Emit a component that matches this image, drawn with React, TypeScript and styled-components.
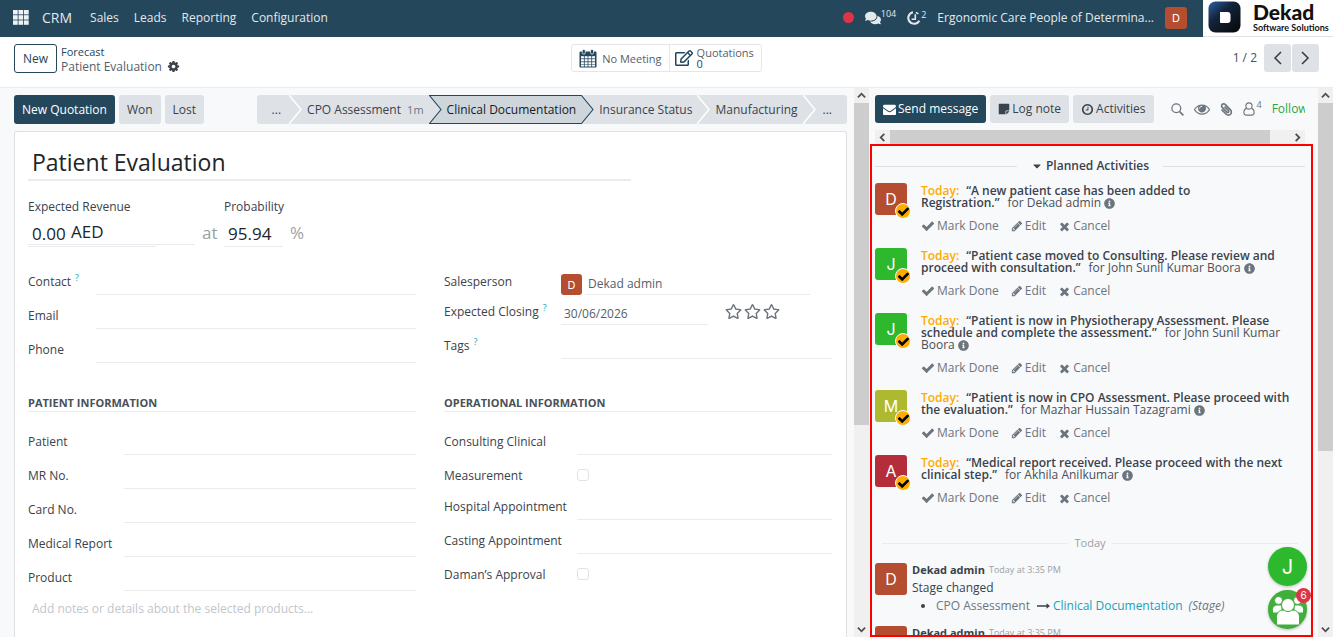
import React, { useId } from "react";
import styled, { createGlobalStyle } from "styled-components";
import { FaComments, FaInfoCircle, FaRegEdit, FaRegStar, FaCaretDown, FaPaperclip, FaStickyNote } from "react-icons/fa";

const color = {
  brand: "#24475c",
  text: "#3a424b",
  value: "#565e67",
  muted: "#6c757d",
  faint: "#9a9fa5",
  line: "#e9ebee",
  grey: "#dee2e6",
  page: "#f8f9fb",
  rust: "#b54d30",
  green: "#2eb82e",
  orange: "#ffac00",
  teal: "#17a2b8",
};

const GlobalStyle = createGlobalStyle`
  *, *::before, *::after { box-sizing: border-box; }
  body { margin: 0; background: #fff; color: ${color.text}; font: 12px/16px "Open Sans", "Noto Sans", sans-serif; }
  button, input, textarea { font: inherit; color: inherit; margin: 0; }
  button { padding: 0; border: 0; background: none; cursor: pointer; }
  a { color: inherit; text-decoration: none; }
  svg { display: block; flex: none; }
`;

/* ---------- icons ---------- */

const Glyph = ({ d, size = 14 }: { d: string; size?: number }) => (
  <svg width={size} height={size} viewBox="0 0 1792 1792" fill="currentColor" aria-hidden="true">
    <path d={d} />
  </svg>
);

const paths = {
  check:
    "M1671 566q0 40-28 68l-724 724-136 136q-28 28-68 28t-68-28l-136-136-362-362q-28-28-28-68t28-68l136-136q28-28 68-28t68 28l294 295 656-657q28-28 68-28t68 28l136 136q28 28 28 68z",
  times:
    "M1490 1322q0 40-28 68l-136 136q-28 28-68 28t-68-28l-294-294-294 294q-28 28-68 28t-68-28l-136-136q-28-28-28-68t28-68l294-294-294-294q-28-28-28-68t28-68l136-136q28-28 68-28t68 28l294 294 294-294q28-28 68-28t68 28l136 136q28 28 28 68t-28 68l-294 294 294 294q28 28 28 68z",
  pencil:
    "M491 1536l91-91-235-235-91 91v107h128v128h107zm523-928q0-22-22-22-10 0-17 7l-542 542q-7 7-7 17 0 22 22 22 10 0 17-7l542-542q7-7 7-17zm-54-192l416 416-832 832h-416v-416zm683 96q0 53-37 90l-166 166-416-416 166-165q36-38 90-38 53 0 91 38l235 234q37 39 37 91z",
  cog: "M1152 896q0-106-75-181t-181-75-181 75-75 181 75 181 181 75 181-75 75-181zm512-109v222q0 12-8 23t-20 13l-185 28q-19 54-39 91 35 50 107 138 10 12 10 25t-9 23q-27 37-99 108t-94 71q-12 0-26-9l-138-108q-44 23-91 38-16 136-29 186-7 28-36 28h-222q-14 0-24.5-8.5t-11.5-21.5l-28-184q-49-16-90-37l-141 107q-10 9-25 9-14 0-25-11-126-114-165-168-7-10-7-23 0-12 8-23 15-21 51-66.5t54-70.5q-27-50-41-99l-183-27q-13-2-21-12.5t-8-23.5v-222q0-12 8-23t19-13l186-28q14-46 39-92-40-57-107-138-10-12-10-24 0-10 9-23 26-36 98.5-107.5t94.5-71.5q13 0 26 10l138 107q44-23 91-38 16-136 29-186 7-28 36-28h222q14 0 24.5 8.5t11.5 21.5l28 184q49 16 90 37l142-107q9-9 24-9 13 0 25 10 129 119 165 170 7 8 7 22 0 12-8 23-15 21-51 66.5t-54 70.5q26 50 41 98l183 28q13 2 21 12.5t8 23.5z",
  clock:
    "M1024 544v448q0 14-9 23t-23 9h-320q-14 0-23-9t-9-23v-64q0-14 9-23t23-9h224v-352q0-14 9-23t23-9h64q14 0 23 9t9 23zm416 352q0-148-73-273t-198-198-273-73-273 73-198 198-73 273 73 273 198 198 273 73 273-73 198-198 73-273zm224 0q0 209-103 385.5t-279.5 279.5-385.5 103-385.5-103-279.5-279.5-103-385.5 103-385.5 279.5-279.5 385.5-103 385.5 103 279.5 279.5 103 385.5z",
  eye: "M1664 960q-152-236-381-353 61 104 61 225 0 185-131.5 316.5t-316.5 131.5-316.5-131.5-131.5-316.5q0-121 61-225-229 117-381 353 133 205 333.5 326.5t434.5 121.5 434.5-121.5 333.5-326.5zm-720-384q0-20-14-34t-34-14q-125 0-214.5 89.5t-89.5 214.5q0 20 14 34t34 14 34-14 14-34q0-86 61-147t147-61q20 0 34-14t14-34zm848 384q0 34-20 69-140 230-376.5 368.5t-499.5 138.5-499.5-139-376.5-368q-20-35-20-69t20-69q140-229 376.5-368t499.5-139 499.5 139 376.5 368q20 35 20 69z",
  envelope:
    "M1792 710v794q0 66-47 113t-113 47h-1472q-66 0-113-47t-47-113v-794q44 49 101 87 362 246 497 345 57 42 92.5 65.5t94.5 48 110 24.5h2q51 0 110-24.5t94.5-48 92.5-65.5q170-123 498-345 57-39 100-87zm0-294q0 79-49 151t-122 123q-376 261-468 325-10 7-42.5 30.5t-54 38-52 32.5-57.5 27-50 9h-2q-23 0-50-9t-57.5-27-52-32.5-54-38-42.5-30.5q-91-64-262-182.5t-205-142.5q-62-42-117-115.5t-55-136.5q0-78 41.5-130t118.5-52h1472q65 0 112.5 47t47.5 113z",
};

const AppsIcon = () => (
  <svg width="16" height="15" viewBox="0 0 16 15" fill="#eef2f4" aria-hidden="true">
    {[0, 5.5, 11].map((x) => [0, 5.2, 10.4].map((y) => <rect key={`${x}-${y}`} x={x} y={y} width="4.7" height="4.4" />))}
  </svg>
);

const ActivityClockIcon = () => (
  <svg width="14" height="14" viewBox="0 0 14 14" fill="none" stroke="currentColor" aria-hidden="true">
    <path d="M6 1.3A5.8 5.8 0 1 0 12.3 9.6" strokeWidth="2.1" />
    <path d="M8.3 3.2v5H4.6" strokeWidth="1.6" />
    <path d="M8.8 1.4a6 6 0 0 1 2.6 1.5" strokeWidth="1.6" />
  </svg>
);

const CalendarIcon = () => (
  <svg width="18" height="19" viewBox="0 0 18 19" aria-hidden="true">
    <path d="M1.5 2.5h15a1 1 0 0 1 1 1v14a1 1 0 0 1-1 1h-15a1 1 0 0 1-1-1v-14a1 1 0 0 1 1-1z" fill={color.brand} />
    {[2, 5.7, 9.4, 13.1].map((x) => [7.2, 10.2, 13.2, 15.9].map((y) => <rect key={`${x}-${y}`} x={x} y={y} width="2.9" height={y > 15 ? 1.6 : 2.2} fill="#fff" />))}
    {[3.3, 11.5].map((x) => (
      <rect key={x} x={x} y="0.5" width="3" height="4.6" rx="1.3" fill={color.brand} stroke="#fff" strokeWidth="0.7" />
    ))}
  </svg>
);

const SearchIcon = () => (
  <svg width="13" height="13" viewBox="0 0 13 13" fill="none" stroke="currentColor" strokeWidth="1.3" aria-hidden="true">
    <circle cx="5.3" cy="5.3" r="4.4" />
    <path d="M8.6 8.6l3.8 3.8" strokeWidth="1.6" />
  </svg>
);

const UserIcon = () => (
  <svg width="12" height="14" viewBox="0 0 12 14" fill="none" stroke="currentColor" strokeWidth="1.1" aria-hidden="true">
    <circle cx="6" cy="4" r="3.1" />
    <path d="M3.6 6.4C1.6 6.8.9 8.6.9 10.6c0 1.6.7 2.5 2 2.5h6.2c1.3 0 2-.9 2-2.5 0-2-.7-3.8-2.7-4.2" />
  </svg>
);

const ArrowRightIcon = () => (
  <svg width="13" height="8" viewBox="0 0 13 8" fill="currentColor" aria-hidden="true">
    <path d="M0 3.3h9.500V1.200L13 4 9.500 6.800V4.700H0z" />
  </svg>
);

const AngleIcon = ({ dir, size = 9 }: { dir: "up" | "down" | "left" | "right"; size?: number }) => {
  const d = { up: "M1 7l4-4 4 4", down: "M1 3l4 4 4-4", left: "M7 1L3 5l4 4", right: "M3 1l4 4-4 4" }[dir];
  return (
    <svg width={size} height={size} viewBox="0 0 10 10" fill="none" stroke="#505050" strokeWidth="2" aria-hidden="true">
      <path d={d} />
    </svg>
  );
};

const PagerIcon = ({ dir }: { dir: "left" | "right" }) => (
  <svg width="9" height="14" viewBox="0 0 9 14" fill="none" stroke="#343a40" strokeWidth="1.5" aria-hidden="true">
    <path d={dir === "left" ? "M8 1L2 7l6 6" : "M1 1l6 6-6 6"} />
  </svg>
);

const GroupIcon = () => (
  <svg width="34" height="34" viewBox="0 0 34 34" fill="#fff" stroke="#3fae3a" strokeWidth="1" aria-hidden="true">
    <circle cx="7.5" cy="7.5" r="4" />
    <circle cx="26.5" cy="7.5" r="4" />
    <path d="M1.5 20v-3.5a4.5 4.5 0 0 1 4.5-4.5h5v8z" />
    <path d="M32.5 20v-3.5a4.5 4.5 0 0 0-4.5-4.5h-5v8z" />
    <path d="M5.5 31v-7.5a6.5 6.5 0 0 1 6.5-6.5h10a6.5 6.5 0 0 1 6.5 6.5V31a1 1 0 0 1-1 1h-21a1 1 0 0 1-1-1z" />
    <circle cx="17" cy="12" r="6.5" />
  </svg>
);

const LogoMark = () => {
  const id = useId();
  return (
    <svg width="33" height="32" viewBox="0 0 33 32" aria-hidden="true">
      <defs>
        <linearGradient id={id} x1="0" y1="0" x2="0.8" y2="0.9">
          <stop offset="0" stopColor="#2d62a8" />
          <stop offset="0.45" stopColor="#13243c" />
          <stop offset="1" stopColor="#0a0e14" />
        </linearGradient>
      </defs>
      <rect x="0.5" y="0.5" width="32" height="31" rx="7" fill={`url(#${id})`} />
      <path d="M12 11h7.5a3 3 0 0 1 3 3v5a3 3 0 0 1-3 3H13a1 1 0 0 1-1-1z" fill="#fff" />
    </svg>
  );
};

/* ---------- shell ---------- */

const Page = styled.div`
  display: flex;
  flex-direction: column;
  height: 100vh;
  padding-bottom: 2px;
  overflow: hidden;
`;

const Navbar = styled.nav`
  display: flex;
  align-items: stretch;
  height: 37px;
  flex: none;
  background: ${color.brand};
  color: #e3e8eb;
  white-space: nowrap;
`;

const NavMenu = styled.div`
  display: flex;
  align-items: center;
  gap: 15px;
  flex: 1;
  padding: 0 13px 2px;
`;

const NavBrand = styled.a`
  margin: 0 3px 0 -2px;
  font-size: 14px;
`;

const NavTools = styled.div`
  display: flex;
  align-items: center;
  gap: 11px;
  padding: 0 16px 2px 0;
`;

const NavCounter = styled.button`
  display: flex;
  align-items: center;
  sup {
    align-self: flex-start;
    font-size: 9px;
    line-height: 8px;
  }
`;

const RecordDot = styled.span`
  width: 11px;
  height: 11px;
  border-radius: 50%;
  background: #dc3545;
`;

const LogoBox = styled.a`
  display: flex;
  gap: 12px;
  width: 130px;
  padding: 1px 0 0 5px;
  background: #fff;
  border-bottom: 1px solid ${color.grey};
`;

const LogoText = styled.span`
  display: flex;
  flex-direction: column;
  color: #111;
  font-family: Lato, "Open Sans", sans-serif;
  font-weight: 700;
  font-size: 9px;
  line-height: 9px;
  strong {
    font-size: 21px;
    line-height: 22px;
  }
`;

const Avatar = styled.span<{ $tone: string; $size: number }>`
  position: relative;
  display: flex;
  align-items: center;
  justify-content: center;
  flex: none;
  width: ${(p) => p.$size}px;
  height: ${(p) => p.$size}px;
  border-radius: 3px;
  background: ${(p) => p.$tone};
  color: #fff;
  font-family: Inter, "Open Sans", sans-serif;
  font-size: ${(p) => (p.$size > 30 ? 16 : 11)}px;
`;

/* ---------- control panel ---------- */

const ControlPanel = styled.header`
  display: grid;
  grid-template-columns: 1fr auto 1fr;
  align-items: start;
  height: 51px;
  flex: none;
  padding: 7px 14px 0;
  border-bottom: 1px solid #e9ecef;
`;

const CrumbArea = styled.div`
  display: flex;
  gap: 4px;
`;

const NewButton = styled.button`
  width: 43px;
  height: 29px;
  border: 1px solid ${color.brand};
  border-radius: 3px;
  color: ${color.brand};
`;

const Crumbs = styled.div`
  display: flex;
  flex-direction: column;
  line-height: 15px;
  a {
    color: ${color.brand};
    font-size: 11px;
  }
  span {
    display: flex;
    align-items: center;
    gap: 5px;
    color: ${color.value};
  }
  svg {
    color: ${color.text};
  }
`;

const Stats = styled.div`
  display: flex;
  height: 28px;
  border: 1px solid #e4e7ea;
  border-radius: 3px;
`;

const Stat = styled.button`
  display: flex;
  align-items: center;
  gap: 5px;
  padding: 0 7px;
  text-align: left;
  font-size: 11px;
  line-height: 11px;
  color: ${color.value};
  & + & {
    padding: 0 7px 0 5px;
    gap: 4px;
    border-left: 1px solid #e4e7ea;
  }
  svg {
    color: ${color.brand};
  }
  b {
    display: block;
    font-weight: 400;
    color: ${color.brand};
  }
`;

const Pager = styled.div`
  display: flex;
  justify-content: flex-end;
  align-items: center;
  gap: 1px;
  span {
    margin-right: 6px;
    color: #495057;
  }
`;

const PagerButton = styled.button`
  display: flex;
  align-items: center;
  justify-content: center;
  width: 27px;
  height: 28px;
  background: ${color.grey};
  border-radius: 3px;
`;

/* ---------- body ---------- */

const Body = styled.main`
  display: grid;
  grid-template-columns: 854fr 15px 449fr 15px;
  flex: 1;
  min-height: 0;
  background: ${color.page};
`;

const FormPane = styled.section`
  display: flex;
  flex-direction: column;
  gap: 7px;
  min-width: 0;
  padding: 7px 7px 0 14px;
  overflow: hidden;
`;

const ScrollColumn = styled.div`
  display: flex;
  flex-direction: column;
  align-items: stretch;
  background: #f0f0f0;
`;

const ScrollRow = styled.div`
  display: flex;
  align-items: center;
  flex: none;
  height: 14px;
  margin: 0 13px 0 6px;
  background: #f0f0f0;
`;

const ScrollArrow = styled.button`
  display: flex;
  align-items: center;
  justify-content: center;
  flex: none;
  width: 15px;
  height: 15px;
`;

const ScrollTrack = styled.div`
  flex: 1;
  align-self: stretch;
`;

const ThumbY = styled.div<{ $part: number }>`
  height: ${(p) => p.$part}%;
  background: #cdcdcd;
`;

const ThumbX = styled.div`
  width: 95%;
  height: 100%;
  background: #cdcdcd;
`;

const ButtonRow = styled.div`
  display: flex;
  gap: 4px;
`;

const Button = styled.button<{ $primary?: boolean; $size?: "sm" }>`
  display: flex;
  align-items: center;
  justify-content: center;
  gap: 2px;
  height: ${(p) => (p.$size ? 28 : 29)}px;
  padding: 0 8px;
  border-radius: 3px;
  background: ${(p) => (p.$primary ? color.brand : color.grey)};
  color: ${(p) => (p.$primary ? "#fff" : color.text)};
  white-space: nowrap;
`;

const StatusBar = styled.div`
  display: flex;
  justify-content: space-between;
`;

const Steps = styled.div`
  display: flex;
  height: 29px;
  background: ${color.grey};
  border-radius: 3px;
  overflow: hidden;
`;

const Step = styled.button<{ $active?: boolean }>`
  padding: 0 5px;
  white-space: nowrap;
  ${(p) =>
    p.$active &&
    `background:#ced6dc; color:#16191c; border:solid #24475c; border-width:1px 0;`}
  small {
    margin-left: 3px;
    font-size: 11px;
    color: ${color.muted};
  }
`;

const MoreStep = styled(Step)<{ $first?: boolean }>`
  padding: 0 ${(p) => (p.$first ? 8 : 15)}px 0 ${(p) => (p.$first ? 15 : 7)}px;
`;

const Chevron = ({ from, to, edge }: { from?: boolean; to?: boolean; edge?: string }) => (
  <svg width="13" height="29" viewBox="0 0 13 29" aria-hidden="true">
    <rect width="13" height="29" fill={to ? "#ced6dc" : color.grey} />
    {to && <path d="M0 .5h13M0 28.5h13" stroke={color.brand} />}
    <path d="M0 0l12 14.5L0 29z" fill={from ? "#ced6dc" : color.grey} />
    <path d="M0 0l12 14.5L0 29" fill="none" stroke={edge || "#fff"} strokeWidth={edge ? 1.1 : 1.5} />
  </svg>
);

/* ---------- form ---------- */

const Sheet = styled.form`
  flex: 1;
  min-height: 0;
  padding: 14px 14px 0 13px;
  background: #fff;
  border: 1px solid ${color.grey};
  border-bottom: 0;
  border-radius: 3px 3px 0 0;
  overflow: hidden;
`;

const TitleInput = styled.input`
  display: block;
  width: 75%;
  height: 35px;
  padding: 0 4px 2px;
  border: 0;
  border-bottom: 2px solid ${color.line};
  background: none;
  color: #212529;
  font-size: 23px;
`;

const Figures = styled.div`
  display: grid;
  grid-template-columns: 167px 29px 59px auto;
  grid-template-rows: 20px 28px;
  row-gap: 3px;
  align-items: start;
  height: 64px;
  margin-top: 16px;
`;

const FigureLabel = styled.label`
  grid-column: span 2;
  line-height: 20px;
`;

const Money = styled.div`
  position: relative;
  height: 25px;
  border-bottom: 1px solid ${color.line};
`;

const Figure = styled.input`
  display: block;
  width: 100%;
  height: 27px;
  padding: 0 4px;
  border: 0;
  border-bottom: 1px solid ${color.line};
  background: none;
  color: #212529;
  font-size: 17px;
  ${Money} & {
    width: 128px;
  }
`;

const Currency = styled.span`
  position: absolute;
  top: 0;
  left: 43px;
  color: #212529;
  font-size: 17px;
  line-height: 24px;
`;

const Unit = styled.span`
  padding-left: 7px;
  color: ${color.faint};
  font-size: 17px;
  line-height: 26px;
`;

const Columns = styled.div`
  display: grid;
  grid-template-columns: 1fr 1fr;
  column-gap: 28px;
`;

const SectionTitle = styled.h2`
  margin: 31px 0 9px;
  border-bottom: 1px solid ${color.line};
  color: #495057;
  font-size: 11px;
  font-weight: 700;
  line-height: 17px;
`;

const Row = styled.div<{ $label: number; $kind?: "check" | "short" }>`
  display: grid;
  grid-template-columns: ${(p) => p.$label}px 1fr;
  height: ${(p) => (p.$kind === "check" ? 31 : p.$kind === "short" ? 30 : 34)}px;
  label {
    padding-top: ${(p) => (p.$kind === "short" ? 7 : 11)}px;
    line-height: 20px;
    white-space: nowrap;
  }
`;

const Hint = styled.sup`
  margin-left: 4px;
  color: ${color.teal};
  font-size: 9px;
  line-height: 8px;
`;

const TextInput = styled.input<{ $w?: number }>`
  align-self: end;
  width: ${(p) => (p.$w ? `${p.$w}%` : "100%")};
  min-width: 0;
  height: 22px;
  padding: 0 3px;
  border: 0;
  border-bottom: 1px solid ${color.line};
  background: none;
  color: ${color.value};
`;

const CheckBox = styled.input`
  appearance: none;
  width: 12px;
  height: 12px;
  margin-top: 14px;
  border: 1px solid #dfe2e6;
  border-radius: 3px;
  background: #fff;
`;

const PersonField = styled.div`
  display: flex;
  align-items: flex-end;
  gap: 3px;
`;

const DateField = styled.div`
  display: flex;
  align-items: flex-end;
`;

const Stars = styled.div`
  display: flex;
  gap: 2px;
  margin: 0 52px 5px 17px;
  color: ${color.muted};
`;

const Notes = styled.textarea`
  display: block;
  width: 100%;
  height: 40px;
  padding: 10px 4px;
  border: 0;
  background: none;
  resize: none;
  &::placeholder {
    color: #bfc6cd;
    opacity: 1;
  }
`;

/* ---------- chatter ---------- */

const Chatter = styled.aside`
  position: relative;
  display: flex;
  flex-direction: column;
  min-width: 0;
  min-height: 0;
`;

const ChatterBar = styled.div`
  display: flex;
  align-items: center;
  gap: 4px;
  flex: none;
  height: 35px;
  margin: 0 13px 7px 6px;
  padding-top: 7px;
  overflow: hidden;
`;

const ChatterTools = styled.div`
  display: flex;
  align-items: center;
  gap: 10px;
  flex: none;
  padding-left: 13px;
`;

const IconButton = styled.button<{ $flip?: boolean }>`
  display: flex;
  flex: none;
  color: ${color.muted};
  svg {
    transform: ${(p) => (p.$flip ? "scaleX(-1)" : "none")};
  }
  sup {
    margin-left: 2px;
    font-size: 9px;
    line-height: 6px;
  }
`;

const FollowLink = styled.button`
  color: #28a745;
`;

const Thread = styled.div`
  flex: 1;
  min-height: 0;
  margin: 0 5px 0 1px;
  padding: 10px 6px 0 3px;
  border: 2px solid #f00;
  overflow: hidden;
`;

const PlannedHeader = styled.h3`
  display: flex;
  align-items: center;
  gap: 14px;
  margin: 0 0 7px;
  font-size: 12px;
  line-height: 20px;
  &::before,
  &::after {
    content: "";
    flex: 1;
    border-top: 1px solid ${color.grey};
  }
  button {
    display: flex;
    align-items: center;
    gap: 3px;
    font-weight: 600;
  }
`;

const Activity = styled.article`
  display: flex;
  gap: 14px;
  padding-bottom: 14px;
`;

const DoneBadge = styled.span`
  position: absolute;
  right: -4px;
  bottom: -4px;
  display: flex;
  align-items: center;
  justify-content: center;
  width: 16px;
  height: 16px;
  border: 1px solid #fff;
  border-radius: 50%;
  background: ${color.orange};
  color: #000;
`;

const ActivityText = styled.p`
  margin: 2px 0 9px;
  line-height: 12px;
  color: #495057;
  strong {
    font-weight: 600;
    color: ${color.text};
  }
  svg {
    display: inline-block;
    margin-top: 1px;
    vertical-align: top;
    color: ${color.muted};
  }
`;

const Due = styled.b`
  margin-right: 7px;
  font-weight: 600;
  color: ${color.orange};
`;

const Assignee = styled.span`
  margin-left: 8px;
`;

const ActivityActions = styled.div`
  display: flex;
  gap: 12px;
  color: ${color.muted};
  button {
    display: flex;
    align-items: center;
    gap: 2px;
  }
`;

const DaySeparator = styled.div`
  display: flex;
  align-items: center;
  gap: 6px;
  margin: 15px 7px 12px;
  color: ${color.faint};
  font-size: 11px;
  &::before,
  &::after {
    content: "";
    flex: 1;
    border-top: 1px solid ${color.line};
  }
`;

const Message = styled.article`
  display: flex;
  gap: 5px;
  height: 63px;
`;

const MessageBody = styled.div`
  line-height: 18px;
  header {
    display: flex;
    gap: 4px;
    padding-bottom: 2px;
    line-height: 14px;
  }
  header strong {
    font-size: 11px;
  }
  time {
    color: ${color.faint};
    font-size: 9px;
  }
`;

const Changes = styled.ul`
  margin: 0;
  padding-left: 24px;
  list-style: disc;
`;

const Change = styled.span`
  display: flex;
  align-items: center;
  gap: 3px;
  span {
    margin-right: 4px;
    color: ${color.muted};
  }
  a {
    color: ${color.teal};
  }
  em {
    margin-left: 3px;
    color: ${color.muted};
  }
`;

const Bubbles = styled.div`
  position: absolute;
  right: 11px;
  bottom: 8px;
  display: flex;
  flex-direction: column;
  gap: 4px;
`;

const Bubble = styled.button<{ $tone: string }>`
  position: relative;
  display: flex;
  align-items: center;
  justify-content: center;
  width: 39px;
  height: 39px;
  border-radius: 50%;
  background: ${(p) => p.$tone};
  box-shadow: 0 1px 3px rgba(0, 0, 0, 0.25);
  color: #fff;
  font-family: Inter, "Open Sans", sans-serif;
  font-size: 20px;
`;

const BubbleCount = styled.span`
  position: absolute;
  top: -2px;
  right: -4px;
  width: 15px;
  height: 15px;
  border-radius: 50%;
  background: #dc3545;
  font-size: 10px;
  line-height: 15px;
`;

/* ---------- composed parts ---------- */

const Field = ({ label, width, hint }: { label: string; width: number; hint?: boolean }) => {
  const id = useId();
  return (
    <Row $label={width}>
      <label htmlFor={id}>
        {label}
        {hint && <Hint>?</Hint>}
      </label>
      <TextInput id={id} />
    </Row>
  );
};

const CheckField = ({ label, width }: { label: string; width: number }) => {
  const id = useId();
  return (
    <Row $label={width} $kind="check">
      <label htmlFor={id}>{label}</label>
      <CheckBox id={id} type="checkbox" />
    </Row>
  );
};

const Scrollbar = ({ part }: { part: number }) => (
  <ScrollColumn>
    <ScrollArrow type="button" aria-label="Scroll up">
      <AngleIcon dir="up" />
    </ScrollArrow>
    <ScrollTrack>
      <ThumbY $part={part} />
    </ScrollTrack>
    <ScrollArrow type="button" aria-label="Scroll down">
      <AngleIcon dir="down" />
    </ScrollArrow>
  </ScrollColumn>
);

const activities = [
  { letter: "D", tone: color.rust, lines: ["“A new patient case has been added to", "Registration.”"], who: ["Dekad admin"] },
  { letter: "J", tone: color.green, lines: ["“Patient case moved to Consulting. Please review and", "proceed with consultation.”"], who: ["John Sunil Kumar Boora"] },
  { letter: "J", tone: color.green, lines: ["“Patient is now in Physiotherapy Assessment. Please", "schedule and complete the assessment.”"], who: ["John Sunil Kumar", "Boora"] },
  { letter: "M", tone: "#adb92e", lines: ["“Patient is now in CPO Assessment. Please proceed with", "the evaluation.”"], who: ["Mazhar Hussain Tazagrami"] },
  { letter: "A", tone: "#b32e3a", lines: ["“Medical report received. Please proceed with the next", "clinical step.”"], who: ["Akhila Anilkumar"] },
];

const ActivityItem = ({ letter, tone, lines, who }: (typeof activities)[number]) => (
  <Activity>
    <Avatar $tone={tone} $size={32}>
      {letter}
      <DoneBadge>
        <Glyph d={paths.check} size={13} />
      </DoneBadge>
    </Avatar>
    <div>
      <ActivityText>
        <Due>Today:</Due>
        <strong>
          {lines[0]}
          <br />
          {lines[1]}
        </strong>
        <Assignee>
          for {who[0]}
          {who[1] && (
            <>
              <br />
              {who[1]}
            </>
          )}
        </Assignee>{" "}
        <FaInfoCircle size={11} />
      </ActivityText>
      <ActivityActions>
        <button type="button">
          <Glyph d={paths.check} />
          Mark Done
        </button>
        <button type="button">
          <Glyph d={paths.pencil} size={12} />
          Edit
        </button>
        <button type="button">
          <Glyph d={paths.times} size={13} />
          Cancel
        </button>
      </ActivityActions>
    </div>
  </Activity>
);

const LogMessage = () => (
  <Message>
    <Avatar $tone={color.rust} $size={32}>
      D
    </Avatar>
    <MessageBody>
      <header>
        <strong>Dekad admin</strong>
        <time>Today at 3:35 PM</time>
      </header>
      Stage changed
      <Changes>
        <li>
          <Change>
            <span>CPO Assessment</span>
            <ArrowRightIcon />
            <a href="#stage">Clinical Documentation</a>
            <em>(Stage)</em>
          </Change>
        </li>
      </Changes>
    </MessageBody>
  </Message>
);

export default function App() {
  return (
    <Page>
      <GlobalStyle />
      <Navbar>
        <NavMenu>
          <AppsIcon />
          <NavBrand href="#crm">CRM</NavBrand>
          <a href="#sales">Sales</a>
          <a href="#leads">Leads</a>
          <a href="#reporting">Reporting</a>
          <a href="#configuration">Configuration</a>
        </NavMenu>
        <NavTools>
          <RecordDot />
          <NavCounter aria-label="Messages">
            <FaComments size={16} />
            <sup>104</sup>
          </NavCounter>
          <NavCounter aria-label="Activities">
            <ActivityClockIcon />
            <sup>2</sup>
          </NavCounter>
          <span>Ergonomic Care People of Determina...</span>
          <Avatar $tone={color.rust} $size={22}>
            D
          </Avatar>
        </NavTools>
        <LogoBox href="#home">
          <LogoMark />
          <LogoText>
            <strong>Dekad</strong>
            Software Solutions
          </LogoText>
        </LogoBox>
      </Navbar>

      <ControlPanel>
        <CrumbArea>
          <NewButton>New</NewButton>
          <Crumbs>
            <a href="#forecast">Forecast</a>
            <span>
              Patient Evaluation
              <Glyph d={paths.cog} size={13} />
            </span>
          </Crumbs>
        </CrumbArea>
        <Stats>
          <Stat>
            <CalendarIcon />
            No Meeting
          </Stat>
          <Stat>
            <FaRegEdit size={18} />
            <span>
              Quotations<b>0</b>
            </span>
          </Stat>
        </Stats>
        <Pager>
          <span>1 / 2</span>
          <PagerButton aria-label="Previous">
            <PagerIcon dir="left" />
          </PagerButton>
          <PagerButton aria-label="Next">
            <PagerIcon dir="right" />
          </PagerButton>
        </Pager>
      </ControlPanel>

      <Body>
        <FormPane>
          <StatusBar>
            <ButtonRow>
              <Button $primary>New Quotation</Button>
              <Button>Won</Button>
              <Button>Lost</Button>
            </ButtonRow>
            <Steps>
              <MoreStep $first>...</MoreStep>
              <Chevron />
              <Step>
                CPO Assessment <small>1m</small>
              </Step>
              <Chevron to edge={color.brand} />
              <Step $active>Clinical Documentation</Step>
              <Chevron from edge={color.brand} />
              <Step>Insurance Status</Step>
              <Chevron />
              <Step>Manufacturing</Step>
              <Chevron />
              <MoreStep>...</MoreStep>
            </Steps>
          </StatusBar>

          <Sheet>
            <TitleInput aria-label="Opportunity" defaultValue="Patient Evaluation" />
            <Figures>
              <FigureLabel htmlFor="revenue">Expected Revenue</FigureLabel>
              <FigureLabel htmlFor="probability">Probability</FigureLabel>
              <Money>
                <Figure id="revenue" defaultValue="0.00" />
                <Currency>AED</Currency>
              </Money>
              <Unit>at</Unit>
              <Figure id="probability" defaultValue="95.94" />
              <Unit>%</Unit>
            </Figures>

            <Columns>
              <div>
                <Field label="Contact" width={68} hint />
                <Field label="Email" width={68} />
                <Field label="Phone" width={68} />
              </div>
              <div>
                <Row $label={117}>
                  <label htmlFor="salesperson">Salesperson</label>
                  <PersonField>
                    <Avatar $tone={color.rust} $size={21}>
                      D
                    </Avatar>
                    <TextInput id="salesperson" $w={83} defaultValue="Dekad admin" />
                  </PersonField>
                </Row>
                <Row $label={117} $kind="short">
                  <label htmlFor="closing">
                    Expected Closing<Hint>?</Hint>
                  </label>
                  <DateField>
                    <TextInput id="closing" defaultValue="30/06/2026" />
                    <Stars>
                      <FaRegStar size={17} />
                      <FaRegStar size={17} />
                      <FaRegStar size={17} />
                    </Stars>
                  </DateField>
                </Row>
                <Field label="Tags" width={117} hint />
              </div>
            </Columns>

            <Columns>
              <div>
                <SectionTitle>PATIENT INFORMATION</SectionTitle>
                <Field label="Patient" width={96} />
                <Field label="MR No." width={96} />
                <Field label="Card No." width={96} />
                <Field label="Medical Report" width={96} />
                <Field label="Product" width={96} />
              </div>
              <div>
                <SectionTitle>OPERATIONAL INFORMATION</SectionTitle>
                <Field label="Consulting Clinical" width={133} />
                <CheckField label="Measurement" width={133} />
                <Field label="Hospital Appointment" width={133} />
                <Field label="Casting Appointment" width={133} />
                <CheckField label="Daman’s Approval" width={133} />
              </div>
            </Columns>
            <Notes aria-label="Notes" placeholder="Add notes or details about the selected products..." />
          </Sheet>
        </FormPane>

        <Scrollbar part={62} />

        <Chatter>
          <ChatterBar>
            <Button $primary $size="sm">
              <Glyph d={paths.envelope} size={13} />
              Send message
            </Button>
            <Button $size="sm">
              <FaStickyNote size={12} />
              Log note
            </Button>
            <Button $size="sm">
              <Glyph d={paths.clock} size={13} />
              Activities
            </Button>
            <ChatterTools>
              <IconButton aria-label="Search">
                <SearchIcon />
              </IconButton>
              <IconButton aria-label="Preview">
                <Glyph d={paths.eye} size={16} />
              </IconButton>
              <IconButton aria-label="Attachments" $flip>
                <FaPaperclip size={13} />
              </IconButton>
              <IconButton aria-label="Followers">
                <UserIcon />
                <sup>4</sup>
              </IconButton>
              <FollowLink>Follow</FollowLink>
            </ChatterTools>
          </ChatterBar>
          <ScrollRow>
            <ScrollArrow type="button" aria-label="Scroll left">
              <AngleIcon dir="left" />
            </ScrollArrow>
            <ScrollTrack>
              <ThumbX />
            </ScrollTrack>
            <ScrollArrow type="button" aria-label="Scroll right">
              <AngleIcon dir="right" />
            </ScrollArrow>
          </ScrollRow>
          <Thread>
            <PlannedHeader>
              <button type="button">
                <FaCaretDown size={12} />
                Planned Activities
              </button>
            </PlannedHeader>
            {activities.map((a, i) => (
              <ActivityItem key={i} {...a} />
            ))}
            <DaySeparator>Today</DaySeparator>
            <LogMessage />
            <LogMessage />
          </Thread>
          <Bubbles>
            <Bubble $tone={color.green} aria-label="Chat with J">
              J
            </Bubble>
            <Bubble $tone="#3fae3a" aria-label="Group chat">
              <GroupIcon />
              <BubbleCount>6</BubbleCount>
            </Bubble>
          </Bubbles>
        </Chatter>

        <Scrollbar part={67} />
      </Body>
    </Page>
  );
}
